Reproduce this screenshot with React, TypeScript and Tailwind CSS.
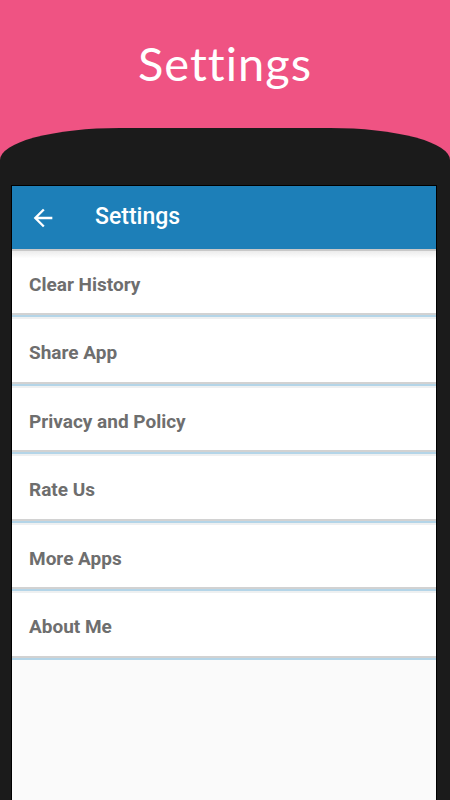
import React from "react";

const items = ["Clear History", "Share App", "Privacy and Policy", "Rate Us", "More Apps", "About Me"];

export default function App() {
  return (
    <div className="w-[450px] h-[800px] bg-[#EF5383] flex flex-col overflow-hidden">
      <div className="h-[128px] shrink-0 flex items-center justify-center">
        <div
          className="text-white text-[47px] leading-none tracking-[1px] pb-[2px]"
          style={{ fontFamily: "Lato, 'Noto Sans', sans-serif", fontWeight: 400 }}
        >
          Settings
        </div>
      </div>
      <div className="flex-1 bg-[#1B1B1B] rounded-tl-[120px_32px] rounded-tr-[120px_32px] pt-[57px] pl-[11px] pr-[13px] flex flex-col">
        <div className="flex-1 flex flex-col bg-[#FAFAFA] border-l border-r border-t border-black" style={{ fontFamily: "Roboto, 'Noto Sans', sans-serif" }}>
          <div className="h-[63px] shrink-0 bg-[#1D7FB8] flex items-center">
            <svg className="ml-[17px]" width="28" height="28" viewBox="0 0 24 24" fill="white">
              <path d="M20 11H7.83l5.59-5.59L12 4l-8 8 8 8 1.41-1.41L7.83 13H20v-2z" />
            </svg>
            <span className="ml-[38px] text-white text-[23px] font-medium">Settings</span>
          </div>
          <div className="h-[2px] bg-[#c8c8c8]" />
          {items.map((t, i) => (
            <div key={t} className="flex flex-col">
              <div className={`${i === 0 ? "h-[62px] bg-gradient-to-b from-[#ececec] to-white to-[12%]" : "h-[62.5px] bg-white"} flex items-center pl-[17px] pt-[6px]`}>
                <span className="text-[#6E6E6E] text-[19px] font-bold">{t}</span>
              </div>
              <div className="h-[2px] bg-[#d2d2d2]" />
              <div className="h-[2px] bg-[#B4D5E8]" />
              {i < items.length - 1 ? <div className="h-[2px] bg-[#eef0f1]" /> : null}
            </div>
          ))}
          <div className="flex-1 bg-[#FAFAFA]" />
        </div>
      </div>
    </div>
  );
}
